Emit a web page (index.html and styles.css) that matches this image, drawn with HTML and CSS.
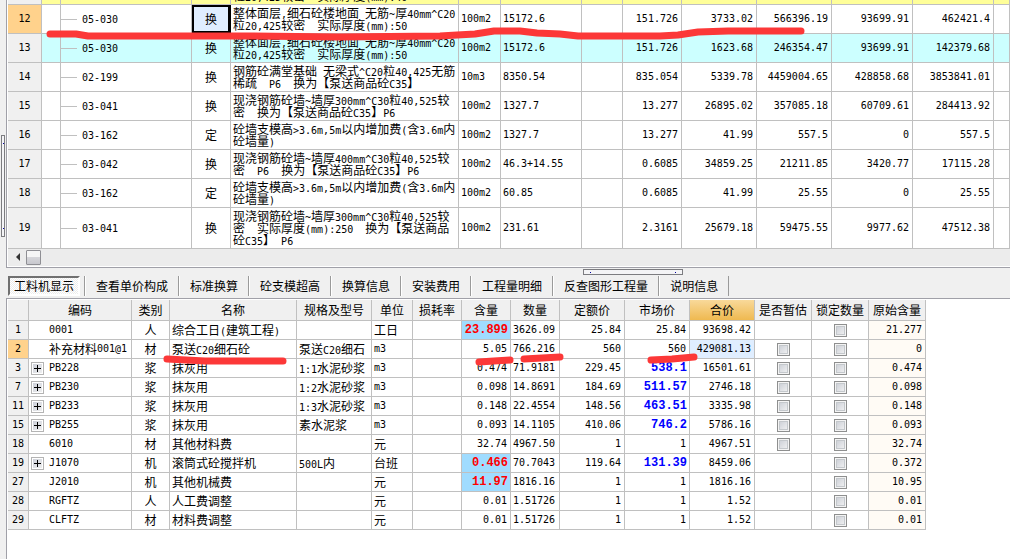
FILE: index.html
```html
<!DOCTYPE html>
<html lang="zh-CN">
<head>
<meta charset="utf-8">
<title>工料机显示</title>
<link rel="stylesheet" href="styles.css">
</head>
<body>
<div class="app">
<div class="gutter"><div class="grip grip-v"></div></div>
<main class="content">
<section class="upper">
<div class="viewport">
<table class="grid items">
<colgroup><col class="w34"><col class="w19"><col class="w131"><col class="w39"><col class="w228"><col class="w42"><col class="w81"><col class="w41"><col class="w59"><col class="w75"><col class="w75"><col class="w81"><col class="w81"><col></colgroup>
<tbody>
<tr class="yellow"><th></th><td></td><td></td><td></td><td class="desc">整体面层<span class="n">,</span>细石砼楼地面<br>粒<span class="n">20,425</span>较密<span class="n">  </span>实际厚度<span class="n">(mm):40</span></td><td></td><td></td><td></td><td></td><td></td><td></td><td></td><td></td><td></td></tr>
<tr><th class="current">12</th><td></td><td class="code"><div><i class="branch"></i>05-030</div></td><td class="kind focus">换</td><td class="desc">整体面层<span class="n">,</span>细石砼楼地面<span class="n"> </span>无筋<span class="n">~</span>厚<span class="n">40mm^C20</span><br>粒<span class="n">20,425</span>较密<span class="n">  </span>实际厚度<span class="n">(mm):50</span></td><td class="txt">100m2</td><td class="txt">15172.6</td><td></td><td class="num">151.726</td><td class="num">3733.02</td><td class="num">566396.19</td><td class="num">93699.91</td><td class="num">462421.4</td><td></td></tr>
<tr class="cyan"><th>13</th><td></td><td class="code"><div><i class="branch"></i>05-030</div></td><td class="kind">换</td><td class="desc">整体面层<span class="n">,</span>细石砼楼地面<span class="n"> </span>无筋<span class="n">~</span>厚<span class="n">40mm^C20</span><br>粒<span class="n">20,425</span>较密<span class="n">  </span>实际厚度<span class="n">(mm):50</span></td><td class="txt">100m2</td><td class="txt">15172.6</td><td></td><td class="num">151.726</td><td class="num">1623.68</td><td class="num">246354.47</td><td class="num">93699.91</td><td class="num">142379.68</td><td></td></tr>
<tr><th>14</th><td></td><td class="code"><div><i class="branch"></i>02-199</div></td><td class="kind">换</td><td class="desc">钢筋砼满堂基础<span class="n"> </span>无梁式<span class="n">^C20</span>粒<span class="n">40,425</span>无筋<br>稀疏<span class="n">  P6  </span>换为【泵送商品砼<span class="n">C35</span>】</td><td class="txt">10m3</td><td class="txt">8350.54</td><td></td><td class="num">835.054</td><td class="num">5339.78</td><td class="num">4459004.65</td><td class="num">428858.68</td><td class="num">3853841.01</td><td></td></tr>
<tr><th>15</th><td></td><td class="code"><div><i class="branch"></i>03-041</div></td><td class="kind">换</td><td class="desc">现浇钢筋砼墙<span class="n">~</span>墙厚<span class="n">300mm^C30</span>粒<span class="n">40,525</span>较<br>密<span class="n">  </span>换为【泵送商品砼<span class="n">C35</span>】<span class="n">P6</span></td><td class="txt">100m2</td><td class="txt">1327.7</td><td></td><td class="num">13.277</td><td class="num">26895.02</td><td class="num">357085.18</td><td class="num">60709.61</td><td class="num">284413.92</td><td></td></tr>
<tr><th>16</th><td></td><td class="code"><div><i class="branch"></i>03-162</div></td><td class="kind">定</td><td class="desc">砼墙支模高<span class="n">&gt;3.6m,5m</span>以内增加费<span class="n">(</span>含<span class="n">3.6m</span>内<br>砼墙量<span class="n">)</span></td><td class="txt">100m2</td><td class="txt">1327.7</td><td></td><td class="num">13.277</td><td class="num">41.99</td><td class="num">557.5</td><td class="num">0</td><td class="num">557.5</td><td></td></tr>
<tr><th>17</th><td></td><td class="code"><div><i class="branch"></i>03-042</div></td><td class="kind">换</td><td class="desc">现浇钢筋砼墙<span class="n">~</span>墙厚<span class="n">400mm^C30</span>粒<span class="n">40,525</span>较<br>密<span class="n">  P6  </span>换为【泵送商品砼<span class="n">C35</span>】<span class="n">P6</span></td><td class="txt">100m2</td><td class="txt">46.3+14.55</td><td></td><td class="num">0.6085</td><td class="num">34859.25</td><td class="num">21211.85</td><td class="num">3420.77</td><td class="num">17115.28</td><td></td></tr>
<tr><th>18</th><td></td><td class="code"><div><i class="branch"></i>03-162</div></td><td class="kind">定</td><td class="desc">砼墙支模高<span class="n">&gt;3.6m,5m</span>以内增加费<span class="n">(</span>含<span class="n">3.6m</span>内<br>砼墙量<span class="n">)</span></td><td class="txt">100m2</td><td class="txt">60.85</td><td></td><td class="num">0.6085</td><td class="num">41.99</td><td class="num">25.55</td><td class="num">0</td><td class="num">25.55</td><td></td></tr>
<tr class="tall"><th>19</th><td></td><td class="code"><div><i class="branch"></i>03-041</div></td><td class="kind">换</td><td class="desc">现浇钢筋砼墙<span class="n">~</span>墙厚<span class="n">300mm^C30</span>粒<span class="n">40,525</span>较<br>密<span class="n">  </span>实际厚度<span class="n">(mm):250  </span>换为【泵送商品<br>砼<span class="n">C35</span>】<span class="n"> P6</span></td><td class="txt">100m2</td><td class="txt">231.61</td><td></td><td class="num">2.3161</td><td class="num">25679.18</td><td class="num">59475.55</td><td class="num">9977.62</td><td class="num">47512.38</td><td></td></tr>
</tbody>
</table>
</div>
<div class="scrollbar"><button class="arrow" aria-label="向左滚动"></button><div class="thumb"></div></div>
</section>
<div class="tabbar">
<div class="grip grip-h"></div>
<nav class="tabs">
<button class="tab active">工料机显示</button><button class="tab">查看单价构成</button><button class="tab">标准换算</button><button class="tab">砼支模超高</button><button class="tab">换算信息</button><button class="tab">安装费用</button><button class="tab">工程量明细</button><button class="tab">反查图形工程量</button><button class="tab">说明信息</button>
</nav>
</div>
<section class="lower">
<table class="grid parts">
<colgroup><col class="w21"><col class="w103"><col class="w38"><col class="w127"><col class="w75"><col class="w41"><col class="w49"><col class="w49"><col class="w49"><col class="w65"><col class="w65"><col class="w65"><col class="w57"><col class="w57"><col class="w57"></colgroup>
<thead>
<tr><th></th><th>编码</th><th>类别</th><th>名称</th><th>规格及型号</th><th>单位</th><th>损耗率</th><th>含量</th><th>数量</th><th>定额价</th><th>市场价</th><th class="sorted">合价</th><th>是否暂估</th><th>锁定数量</th><th>原始含量</th></tr>
</thead>
<tbody>
<tr><th>1</th><td class="code"><div><i class="pad"></i>0001</div></td><td class="kind">人</td><td>综合工日<span class="n">(</span>建筑工程<span class="n">)</span></td><td></td><td>工日</td><td></td><td class="num edited">23.899</td><td class="txt">3626.09</td><td class="num">25.84</td><td class="num">25.84</td><td class="num">93698.42</td><td></td><td class="check"><input type="checkbox" aria-label="锁定数量 1"></td><td class="num origin">21.277</td></tr>
<tr><th class="current">2</th><td class="code"><div><i class="pad"></i><span class="zh">补充材料</span>001@1</div></td><td class="kind">材</td><td>泵送<span class="n">C20</span>细石砼</td><td>泵送<span class="n">C20</span>细石</td><td class="txt">m3</td><td></td><td class="num">5.05</td><td class="txt">766.216</td><td class="num">560</td><td class="num">560</td><td class="num picked">429081.13</td><td class="check"><input type="checkbox" aria-label="是否暂估 2"></td><td class="check"><input type="checkbox" aria-label="锁定数量 2"></td><td class="num origin">0</td></tr>
<tr><th>3</th><td class="code"><div><button class="expand" aria-label="展开 PB228"></button>PB228</div></td><td class="kind">浆</td><td>抹灰用</td><td><span class="n">1:1</span>水泥砂浆</td><td class="txt">m3</td><td></td><td class="num">0.474</td><td class="txt">71.9181</td><td class="num">229.45</td><td class="num market">538.1</td><td class="num">16501.61</td><td class="check"><input type="checkbox" aria-label="是否暂估 3"></td><td class="check"><input type="checkbox" aria-label="锁定数量 3"></td><td class="num origin">0.474</td></tr>
<tr><th>7</th><td class="code"><div><button class="expand" aria-label="展开 PB230"></button>PB230</div></td><td class="kind">浆</td><td>抹灰用</td><td><span class="n">1:2</span>水泥砂浆</td><td class="txt">m3</td><td></td><td class="num">0.098</td><td class="txt">14.8691</td><td class="num">184.69</td><td class="num market">511.57</td><td class="num">2746.18</td><td class="check"><input type="checkbox" aria-label="是否暂估 7"></td><td class="check"><input type="checkbox" aria-label="锁定数量 7"></td><td class="num origin">0.098</td></tr>
<tr><th>11</th><td class="code"><div><button class="expand" aria-label="展开 PB233"></button>PB233</div></td><td class="kind">浆</td><td>抹灰用</td><td><span class="n">1:3</span>水泥砂浆</td><td class="txt">m3</td><td></td><td class="num">0.148</td><td class="txt">22.4554</td><td class="num">148.56</td><td class="num market">463.51</td><td class="num">3335.98</td><td class="check"><input type="checkbox" aria-label="是否暂估 11"></td><td class="check"><input type="checkbox" aria-label="锁定数量 11"></td><td class="num origin">0.148</td></tr>
<tr><th>15</th><td class="code"><div><button class="expand" aria-label="展开 PB255"></button>PB255</div></td><td class="kind">浆</td><td>抹灰用</td><td>素水泥浆</td><td class="txt">m3</td><td></td><td class="num">0.093</td><td class="txt">14.1105</td><td class="num">410.06</td><td class="num market">746.2</td><td class="num">5786.16</td><td class="check"><input type="checkbox" aria-label="是否暂估 15"></td><td class="check"><input type="checkbox" aria-label="锁定数量 15"></td><td class="num origin">0.093</td></tr>
<tr><th>18</th><td class="code"><div><i class="pad"></i>6010</div></td><td class="kind">材</td><td>其他材料费</td><td></td><td>元</td><td></td><td class="num">32.74</td><td class="txt">4967.50</td><td class="num">1</td><td class="num">1</td><td class="num">4967.51</td><td class="check"><input type="checkbox" aria-label="是否暂估 18"></td><td class="check"><input type="checkbox" aria-label="锁定数量 18"></td><td class="num origin">32.74</td></tr>
<tr><th>19</th><td class="code"><div><button class="expand" aria-label="展开 J1070"></button>J1070</div></td><td class="kind">机</td><td>滚筒式砼搅拌机</td><td><span class="n">500L</span>内</td><td>台班</td><td></td><td class="num edited">0.466</td><td class="txt">70.7043</td><td class="num">119.64</td><td class="num market">131.39</td><td class="num">8459.06</td><td></td><td class="check"><input type="checkbox" aria-label="锁定数量 19"></td><td class="num origin">0.372</td></tr>
<tr><th>27</th><td class="code"><div><i class="pad"></i>J2010</div></td><td class="kind">机</td><td>其他机械费</td><td></td><td>元</td><td></td><td class="num edited">11.97</td><td class="txt">1816.16</td><td class="num">1</td><td class="num">1</td><td class="num">1816.16</td><td></td><td class="check"><input type="checkbox" aria-label="锁定数量 27"></td><td class="num origin">10.95</td></tr>
<tr><th>28</th><td class="code"><div><i class="pad"></i>RGFTZ</div></td><td class="kind">人</td><td>人工费调整</td><td></td><td>元</td><td></td><td class="num">0.01</td><td class="txt">1.51726</td><td class="num">1</td><td class="num">1</td><td class="num">1.52</td><td></td><td class="check"><input type="checkbox" aria-label="锁定数量 28"></td><td class="num origin">0.01</td></tr>
<tr><th>29</th><td class="code"><div><i class="pad"></i>CLFTZ</div></td><td class="kind">材</td><td>材料费调整</td><td></td><td>元</td><td></td><td class="num">0.01</td><td class="txt">1.51726</td><td class="num">1</td><td class="num">1</td><td class="num">1.52</td><td></td><td class="check"><input type="checkbox" aria-label="锁定数量 29"></td><td class="num origin">0.01</td></tr>
</tbody>
</table>
</section>
</main>
<svg class="marks" width="1010" height="559" viewBox="0 0 1010 559" aria-hidden="true">
<path d="M50 34H76L88 36H250L338 37L440 36L457 35L475 34L494 31H520L537 33L560 34L578 36H660L678 35L698 32L728 31H801"/>
<path d="M167 359L186 360L205 361H283"/>
<path d="M479 362L494 361L510 360"/>
<path d="M524 359L542 358L560 357"/>
<path d="M651 360L672 359L694 357"/>
</svg>
</div>
</body>
</html>
```
FILE: styles.css
```css
* { box-sizing: border-box; }

body {
  margin: 0;
  background: #f0f0f0;
  color: #000;
  font: 12px/12px "Noto Sans CJK SC", "Liberation Sans", sans-serif;
}

button, input { font: inherit; margin: 0; padding: 0; }

.app { position: relative; display: flex; min-height: 100vh; overflow: hidden; }
.gutter { flex: none; width: 6px; padding-top: 135px; }
.content { flex: 1; min-width: 0; display: flex; flex-direction: column; }

.grip { border: 1px solid #7c7c80; background: #f4f4f6; display: flex; justify-content: space-between; }
.grip::before, .grip::after { content: ""; width: 1px; height: 1px; background: #0000a0; }
.grip-v { width: 4px; height: 102px; margin-left: 1px; padding: 7px 0; flex-direction: column; align-items: flex-end; }
.grip-h { position: absolute; top: 1px; left: 577px; width: 100px; height: 6px; padding: 2px 6px; }

.upper { background: #fff; border-left: 1px solid #a0a0a8; border-bottom: 1px solid #a0a0a8; padding-left: 1px; }
.viewport { overflow: hidden; }

.grid { table-layout: fixed; border-collapse: separate; border-spacing: 0; background: #fff; }
.grid th, .grid td {
  border: solid #c0c0c0;
  border-width: 0 1px 1px 0;
  padding: 0 2px;
  overflow: hidden;
  white-space: pre;
  text-align: left;
  font-weight: 400;
  vertical-align: middle;
}
.grid th { background: #f0f0f0; text-align: center; padding: 0; }
.grid tbody th, .grid td.code, .grid td.num, .grid td.txt, .n {
  font-family: "DejaVu Sans Mono", "Liberation Mono", monospace;
  font-size: 10px;
}
.n { line-height: 1px; }
.zh { font-family: "Noto Sans CJK SC", sans-serif; font-size: 12px; }
.grid td.num { text-align: right; padding-right: 3px; }
.grid td.kind { text-align: center; }
.grid tbody th.current { background: #ffd28c; }

/* upper grid, scrolled down so that its first row is partly hidden */
.items { width: 100%; margin-top: -24px; }
.items tr { height: 29px; }
.items tr.tall { height: 41px; }
.items .yellow td { background: #ffff99; }
.items .cyan td { background: #ccffff; }
.items td.focus { background: #e0eeff; box-shadow: inset 0 0 0 2px #000; border-color: #000; }
.items .code { padding: 0; }
.items .code div { display: flex; align-items: center; gap: 5px; padding-top: 1px; }
.branch { width: 16px; height: 1px; background: #c0c0c0; }

.scrollbar { display: flex; align-items: center; height: 18px; padding: 1px 0 2px 2px; background: #ececec; border-bottom: 1px solid #fff; }
.arrow { width: 16px; height: 14px; border: 0; background: none; display: flex; align-items: center; justify-content: center; }
.arrow::before { content: ""; border: 4px solid transparent; border-left: 0; border-right-color: #333; }
.thumb { width: 15px; height: 15px; border: 1px solid #8f8f94; border-radius: 1px; background: linear-gradient(#f6f6f6 45%, #d6d6da 50%, #c8c8ce); }

.tabbar { position: relative; padding: 8px 0 2px 2px; }
.tabs { display: flex; align-items: center; }
.tab { height: 20px; border: 0; background: none; padding: 0 10px; white-space: nowrap; color: #000; line-height: 18px; }
.tab + .tab { border-left: 1px solid #9a9a9a; box-shadow: inset 1px 0 #fff; padding: 0 10px 0 11px; }
.tab:last-child { border-right: 1px solid #9a9a9a; }
.tab.active {
  margin-right: 4px;
  padding: 0 4px;
  border: 2px solid;
  border-color: #707070 #fff #fff #707070;
  background: conic-gradient(#fff 25%, #ececec 0 50%, #fff 0 75%, #ececec 0) 0 0 / 2px 2px;
  line-height: 16px;
}

.lower { flex: 1; background: #fff; border: solid #a0a0a8; border-width: 1px 0 0 1px; padding: 1px 0 0 1px; }
.parts { width: 918px; }
.parts tr { height: 19px; }
.parts thead tr { height: 21px; }
.parts thead th.sorted { background: linear-gradient(#f9d99a, #efb950); }
.parts td.code { padding: 0 2px; }
.parts .code div { display: flex; align-items: center; }
.pad, .expand { flex: none; width: 13px; margin-right: 5px; }
.expand {
  height: 13px;
  border: 1px solid #b4b4b4;
  box-shadow: inset 0 0 0 1px #fff;
  background:
    linear-gradient(#000, #000) center / 7px 1px no-repeat,
    linear-gradient(#000, #000) center / 1px 7px no-repeat,
    linear-gradient(135deg, #c8ccd6, #f2f2f2);
}
.parts td.edited, .parts td.market {
  font-family: "Liberation Mono", monospace;
  font-size: 12px;
  font-weight: 700;
  padding-right: 2px;
}
.parts td.edited { background: #a0dcff; color: #f00; }
.parts td.market { color: #00f; }
.parts td.picked { background: #e0eeff; }
.parts td.origin { background: #fffbf5; }
.parts td.check { padding: 0; text-align: center; font-size: 0; line-height: 0; }
input[type="checkbox"] {
  appearance: none;
  width: 13px;
  height: 13px;
  vertical-align: middle;
  border: 1px solid #8e8f8f;
  box-shadow: inset 0 0 0 1px #f4f4f4, inset 0 0 0 2px #c4c8cc;
  background: linear-gradient(135deg, #c6cad2, #f6f6f6);
}

.marks { position: absolute; top: 0; left: 0; pointer-events: none; fill: none; stroke: #fc3838; stroke-width: 7; stroke-linecap: round; stroke-linejoin: round; }

.w19 { width: 19px; } .w21 { width: 21px; } .w34 { width: 34px; } .w38 { width: 38px; }
.w39 { width: 39px; } .w41 { width: 41px; } .w42 { width: 42px; } .w49 { width: 49px; }
.w57 { width: 57px; } .w59 { width: 59px; } .w65 { width: 65px; } .w75 { width: 75px; }
.w81 { width: 81px; } .w103 { width: 103px; } .w127 { width: 127px; } .w131 { width: 131px; }
.w228 { width: 228px; }
```
